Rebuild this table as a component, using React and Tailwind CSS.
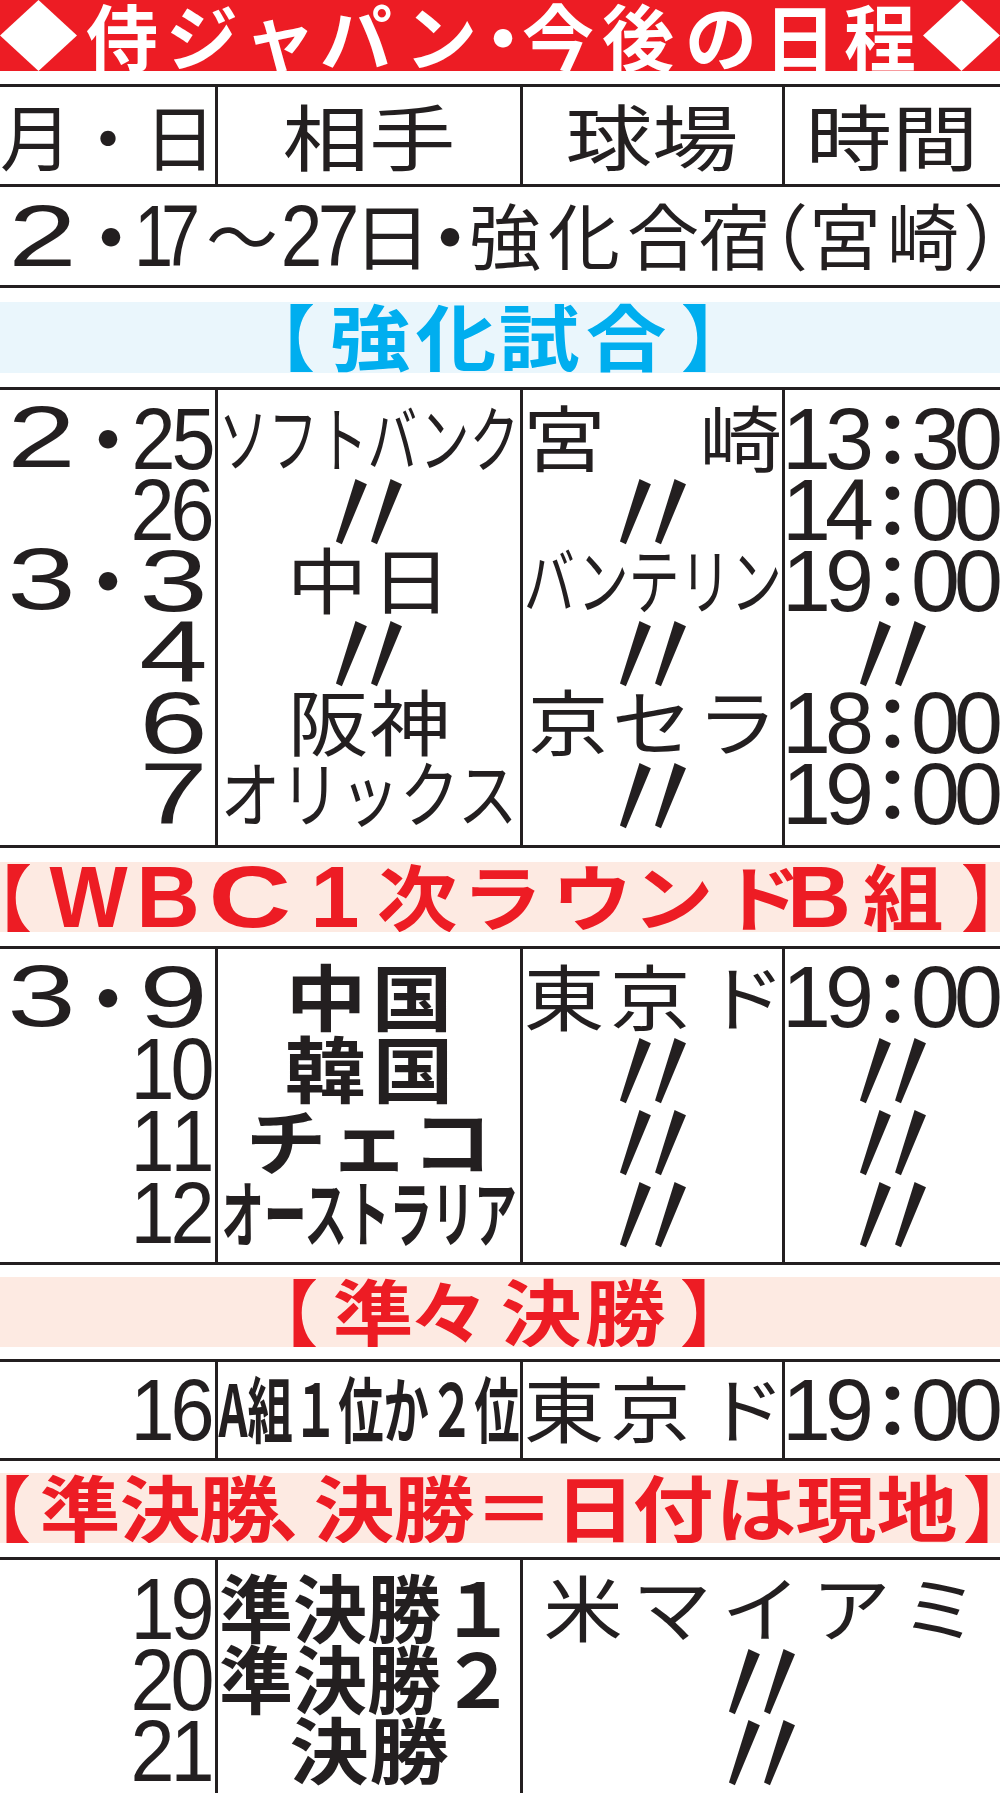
import React from "react";

const JF = "font-['Noto_Sans_CJK_JP',sans-serif]";
const NF = "font-['Liberation_Sans',sans-serif]";

const jp = `${JF} inline-block shrink-0 whitespace-nowrap text-[72px] leading-[60px] pb-[7px]`;
const jb = `${jp} font-bold`;
const jbs = `${jp} font-bold scale-x-[1.12]`;
const num = `${NF} inline-block shrink-0 whitespace-nowrap text-[88px] leading-[64px]`;
const numB = `${num} font-bold`;
const wide = `${num} scale-x-[1.4]`;
const narrow = `${num} scale-x-[0.9]`;
const LINE = "border-[#231f20]";

const tj = `${JF} inline-block text-[72px] font-bold leading-[64px] pb-[3px]`;
const TITLE = [
  ["◆", "w-[77px]"],
  ["侍", "w-[72px] ml-[9px]", tj],
  ["ジ", "w-[72px] ml-[8px]", tj],
  ["ャ", "w-[72px] ml-[6px]", tj],
  ["パ", "w-[72px] ml-[4px]", tj],
  ["ン", "w-[72px] ml-[13px]", tj],
  ["・", "w-[72px] -ml-[10px]", tj],
  ["今", "w-[72px] -ml-[17px]", tj],
  ["後", "w-[72px] ml-[8px]", tj],
  ["の", "w-[72px] ml-[11px]", tj],
  ["日", "w-[72px] ml-[7px]", tj],
  ["程", "w-[72px] ml-[8px]", tj],
  ["◆", "w-[77px] ml-[7px]"],
];

const ROW2 = [
  ["2", "w-[50px] ml-[17px]", wide],
  ["・", "w-[72px] ml-[8px]", jb],
  ["1", "w-[50px] -ml-[19px]", `${num} scale-x-[0.8]`],
  ["7", "w-[50px] -ml-[23px]", `${num} scale-x-[0.8]`],
  ["〜", "w-[72px] ml-[1px]", jp],
  ["2", "w-[50px] -ml-[2px]", `${num} scale-x-[0.85]`],
  ["7", "w-[50px] -ml-[13px]", `${num} scale-x-[0.85]`],
  ["日", "w-[72px] -ml-[7px]", `${jp} scale-x-[1.1]`],
  ["・", "w-[72px] -ml-[14px]", jb],
  ["強", "w-[72px] -ml-[17px]", jp],
  ["化", "w-[72px] ml-[7px]", jp],
  ["合", "w-[72px] ml-[7px]", jp],
  ["宿", "w-[72px]", jp],
  ["（", "w-[72px] -ml-[35px]", jp],
  ["宮", "w-[72px] ml-[1px]", jp],
  ["崎", "w-[72px] ml-[6px]", jp],
  ["）", "w-[72px] ml-[4px]", jp],
];

const TRAIN = [
  ["【", "w-[72px] ml-[243px]", jb],
  ["強", "w-[72px] ml-[19px]", jbs],
  ["化", "w-[72px] ml-[14px]", jbs],
  ["試", "w-[72px] ml-[11px]", jbs],
  ["合", "w-[72px] ml-[15px]", jbs],
  ["】", "w-[72px] ml-[19px]", jb],
];

const WBC = [
  ["【", "w-[72px] -ml-[40px]", jb],
  ["W", "w-[84px] ml-[15px]", `${numB} scale-x-[0.94]`],
  ["B", "w-[64px] ml-[5px]", numB],
  ["C", "w-[64px] ml-[18px]", `${numB} scale-x-[1.3]`],
  ["1", "w-[50px] ml-[28px]", numB],
  ["次", "w-[72px] ml-[21px]", jbs],
  ["ラ", "w-[72px] ml-[13px]", jbs],
  ["ウ", "w-[72px] ml-[18px]", jbs],
  ["ン", "w-[72px] ml-[9px]", jbs],
  ["ド", "w-[72px] ml-[16px]", jbs],
  ["B", "w-[64px] -ml-[10px]", numB],
  ["組", "w-[72px] ml-[16px]", jbs],
  ["】", "w-[72px] ml-[22px]", jb],
];

const QF = [
  ["【", "w-[72px] ml-[246px]", jb],
  ["準", "w-[72px] ml-[19px]", jbs],
  ["々", "w-[72px] ml-[4px]", jbs],
  ["決", "w-[72px] ml-[20px]", jbs],
  ["勝", "w-[72px] ml-[12px]", jbs],
  ["】", "w-[72px] ml-[19px]", jb],
];

const SEMI = [
  ["【", "w-[72px] -ml-[41px]", jb],
  ["準", "w-[72px] ml-[13px]", jbs],
  ["決", "w-[72px] ml-[8px]", jbs],
  ["勝", "w-[72px] ml-[7px]", jbs],
  ["、", "w-[72px] -ml-[6px]", jb],
  ["決", "w-[72px] -ml-[23px]", jbs],
  ["勝", "w-[72px] ml-[8px]", jbs],
  ["＝", "w-[72px] ml-[8px]", jbs],
  ["日", "w-[72px] ml-[9px]", jbs],
  ["付", "w-[72px] ml-[6px]", jbs],
  ["は", "w-[72px] ml-[11px]", jbs],
  ["現", "w-[72px] ml-[8px]", jbs],
  ["地", "w-[72px] ml-[9px]", jbs],
  ["】", "w-[72px] ml-[10px]", jb],
];

function Diamond() {
  return (
    <svg width="77" height="71" viewBox="0 0 77 71" className="shrink-0">
      <polygon points="38.5,0 77,35.5 38.5,71 0,35.5" fill="#fff" />
    </svg>
  );
}

// a line of glyphs, each centred in its own box
function Line({ items, className }) {
  return (
    <div className={`flex items-center overflow-hidden ${className}`}>
      {items.map(([c, box, cls], i) => (
        <span key={i} className={`flex shrink-0 justify-center ${box}`}>
          {c === "◆" ? <Diamond /> : <span className={cls}>{c}</span>}
        </span>
      ))}
    </div>
  );
}

function Ditto() {
  return (
    <span className={`${JF} inline-block shrink-0 text-[132px] leading-[58px] pb-[12px] scale-x-[0.92]`}>
      〃
    </span>
  );
}

function Day({ h, left, right }) {
  const single = right.length === 1;
  return (
    <div className={`flex ${h} shrink-0 items-center justify-between`}>
      <span className="flex">
        {left && (
          <>
            <span className="flex w-[83px] justify-center">
              <span className={wide}>{left}</span>
            </span>
            <span className="flex w-[50px] justify-center">
              <span className={jb}>・</span>
            </span>
          </>
        )}
      </span>
      {single ? (
        <span className="mr-[6px] flex w-[72px] justify-center">
          <span className={wide}>{right}</span>
        </span>
      ) : (
        <span className="mr-[3px] flex">
          {right.split("").map((d, i) => (
            <span key={i} className="flex w-[40px] justify-center">
              <span className={narrow}>{d}</span>
            </span>
          ))}
        </span>
      )}
    </div>
  );
}

function Time({ h, t }) {
  return (
    <div className={`flex ${h} shrink-0 items-center`}>
      {t.split("").map((c, i) => (
        <span key={i} className="flex w-[43px] shrink-0 justify-center">
          {c === ":" ? <span className={jb}>：</span> : <span className={num}>{c}</span>}
        </span>
      ))}
    </div>
  );
}

function Cell({ h, className = "", children }) {
  return <div className={`flex ${h} shrink-0 items-center justify-center ${className}`}>{children}</div>;
}

function TokyoDome({ h }) {
  return (
    <Cell h={h} className="pl-[4px]">
      <span className={`${jp} scale-x-[1.12]`}>東</span>
      <span className={`${jp} ml-[14px] scale-x-[1.12]`}>京</span>
      <span className={`${jp} ml-[22px] scale-x-[1.12]`}>ド</span>
    </Cell>
  );
}

const C1 = "flex w-[215px] shrink-0 flex-col";
const C2 = `flex w-[305px] shrink-0 flex-col border-l-[3px] ${LINE}`;
const C3 = `flex w-[262px] shrink-0 flex-col border-l-[3px] ${LINE}`;
const C4 = `flex flex-1 flex-col border-l-[3px] ${LINE}`;

export default function App() {
  const h1 = "h-[71px]";
  const h2 = "h-[72px]";
  return (
    <div className="h-[1793px] w-[1000px] overflow-hidden bg-white text-[#231f20]">
      <Line items={TITLE} className="h-[71px] bg-[#ed1c24] text-white" />

      {/* header */}
      <div className={`mt-[13px] flex h-[103px] border-y-[3px] ${LINE}`}>
        <div className={`${C1} justify-center pt-[4px]`}>
          <span className={jp}>月・日</span>
        </div>
        <div className={`${C2} items-center justify-center pt-[4px]`}>
          <span className={`${jp} scale-x-[1.2]`}>相手</span>
        </div>
        <div className={`${C3} items-center justify-center pt-[4px]`}>
          <span className={`${jp} scale-x-[1.2]`}>球場</span>
        </div>
        <div className={`${C4} items-center justify-center pt-[4px]`}>
          <span className={`${jp} scale-x-[1.2]`}>時間</span>
        </div>
      </div>

      <Line items={ROW2} className={`h-[101px] border-b-[3px] ${LINE}`} />

      <Line items={TRAIN} className="mt-[14px] h-[71px] bg-[#eaf6fc] text-[#00aeef]" />

      {/* 強化試合 */}
      <div className={`mt-[14px] flex h-[461px] border-y-[3px] ${LINE}`}>
        <div className={`${C1} pt-[13px]`}>
          <Day h={h1} left="2" right="25" />
          <Day h={h1} right="26" />
          <Day h={h1} left="3" right="3" />
          <Day h={h1} right="4" />
          <Day h={h1} right="6" />
          <Day h={h1} right="7" />
        </div>
        <div className={`${C2} pt-[13px]`}>
          <Cell h={h1}>
            <span className={`${jp} scale-x-[0.69]`}>ソフトバンク</span>
          </Cell>
          <Cell h={h1}>
            <Ditto />
          </Cell>
          <Cell h={h1} className="gap-[12px]">
            <span className={`${jp} scale-x-[1.12]`}>中</span>
            <span className={`${jp} scale-x-[1.12]`}>日</span>
          </Cell>
          <Cell h={h1}>
            <Ditto />
          </Cell>
          <Cell h={h1} className="gap-[10px]">
            <span className={`${jp} scale-x-[1.12]`}>阪</span>
            <span className={`${jp} scale-x-[1.12]`}>神</span>
          </Cell>
          <Cell h={h1}>
            <span className={`${jp} scale-x-[0.83]`}>オリックス</span>
          </Cell>
        </div>
        <div className={`${C3} pt-[13px]`}>
          <Cell h={h1} className="justify-between!">
            <span className={`${jp} origin-left scale-x-[1.15]`}>宮</span>
            <span className={`${jp} origin-right scale-x-[1.15]`}>崎</span>
          </Cell>
          <Cell h={h1}>
            <Ditto />
          </Cell>
          <Cell h={h1}>
            <span className={`${jp} scale-x-[0.71]`}>バンテリン</span>
          </Cell>
          <Cell h={h1}>
            <Ditto />
          </Cell>
          <Cell h={h1} className="gap-[12px]">
            <span className={`${jp} scale-x-[1.12]`}>京</span>
            <span className={`${jp} scale-x-[1.12]`}>セ</span>
            <span className={`${jp} scale-x-[1.12]`}>ラ</span>
          </Cell>
          <Cell h={h1}>
            <Ditto />
          </Cell>
        </div>
        <div className={`${C4} pt-[13px]`}>
          <Time h={h1} t="13:30" />
          <Time h={h1} t="14:00" />
          <Time h={h1} t="19:00" />
          <Cell h={h1}>
            <Ditto />
          </Cell>
          <Time h={h1} t="18:00" />
          <Time h={h1} t="19:00" />
        </div>
      </div>

      <Line items={WBC} className="mt-[14px] h-[70px] bg-[#fdeae2] text-[#ed1c24]" />

      {/* WBC 1次ラウンド */}
      <div className={`mt-[14px] flex h-[319px] border-y-[3px] ${LINE}`}>
        <div className={`${C1} pt-[12px]`}>
          <Day h={h2} left="3" right="9" />
          <Day h={h2} right="10" />
          <Day h={h2} right="11" />
          <Day h={h2} right="12" />
        </div>
        <div className={`${C2} pt-[12px]`}>
          <Cell h={h2} className="gap-[14px]">
            <span className={jbs}>中</span>
            <span className={jbs}>国</span>
          </Cell>
          <Cell h={h2} className="gap-[15px]">
            <span className={jbs}>韓</span>
            <span className={jbs}>国</span>
          </Cell>
          <Cell h={h2} className="gap-[11px]">
            <span className={jbs}>チ</span>
            <span className={jbs}>ェ</span>
            <span className={jbs}>コ</span>
          </Cell>
          <Cell h={h2}>
            <span className={`${jb} scale-x-[0.59]`}>オーストラリア</span>
          </Cell>
        </div>
        <div className={`${C3} pt-[12px]`}>
          <TokyoDome h={h2} />
          <Cell h={h2}>
            <Ditto />
          </Cell>
          <Cell h={h2}>
            <Ditto />
          </Cell>
          <Cell h={h2}>
            <Ditto />
          </Cell>
        </div>
        <div className={`${C4} pt-[12px]`}>
          <Time h={h2} t="19:00" />
          <Cell h={h2}>
            <Ditto />
          </Cell>
          <Cell h={h2}>
            <Ditto />
          </Cell>
          <Cell h={h2}>
            <Ditto />
          </Cell>
        </div>
      </div>

      <Line items={QF} className="mt-[12px] h-[70px] bg-[#fdeae2] text-[#ed1c24]" />

      {/* 準々決勝 */}
      <div className={`mt-[12px] flex h-[102px] border-y-[3px] ${LINE}`}>
        <div className={`${C1} pt-[12px]`}>
          <Day h={h1} right="16" />
        </div>
        <div className={`${C2} pt-[12px]`}>
          <Cell h={h1}>
            <span className={`${jb} scale-x-[0.63]`}>A組１位か２位</span>
          </Cell>
        </div>
        <div className={`${C3} pt-[12px]`}>
          <TokyoDome h={h1} />
        </div>
        <div className={`${C4} pt-[12px]`}>
          <Time h={h1} t="19:00" />
        </div>
      </div>

      <Line items={SEMI} className="mt-[12px] h-[70px] bg-[#fdeae2] text-[#ed1c24]" />

      {/* 準決勝、決勝 */}
      <div className={`mt-[14px] flex h-[236px] border-t-[3px] ${LINE}`}>
        <div className={`${C1} pt-[13px]`}>
          <Day h={h1} right="19" />
          <Day h={h1} right="20" />
          <Day h={h1} right="21" />
        </div>
        <div className={`${C2} pt-[13px]`}>
          <Cell h={h1} className="justify-start! pl-[1px]">
            <span className={`${jb} text-[74px]`}>準決勝１</span>
          </Cell>
          <Cell h={h1} className="justify-start! pl-[1px]">
            <span className={`${jb} text-[74px]`}>準決勝２</span>
          </Cell>
          <Cell h={h1} className="gap-[8px]">
            <span className={`${jb} scale-x-[1.1]`}>決</span>
            <span className={`${jb} scale-x-[1.1]`}>勝</span>
          </Cell>
        </div>
        <div className={`flex flex-1 flex-col border-l-[3px] ${LINE} pt-[13px]`}>
          <Cell h={h1} className="gap-[17px]">
            <span className={`${jp} scale-x-[1.1]`}>米</span>
            <span className={`${jp} scale-x-[1.1]`}>マ</span>
            <span className={`${jp} scale-x-[1.1]`}>イ</span>
            <span className={`${jp} scale-x-[1.1]`}>ア</span>
            <span className={`${jp} scale-x-[1.1]`}>ミ</span>
          </Cell>
          <Cell h={h1}>
            <Ditto />
          </Cell>
          <Cell h={h1}>
            <Ditto />
          </Cell>
        </div>
      </div>
    </div>
  );
}
